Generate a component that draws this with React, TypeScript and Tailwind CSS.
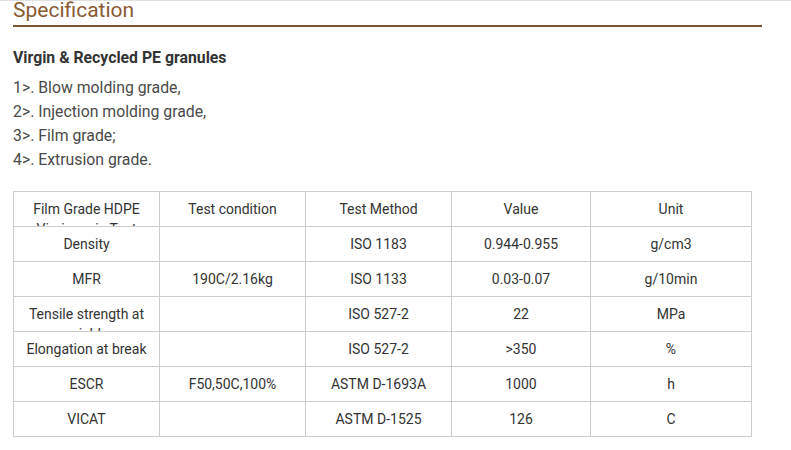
import React from "react";

const rows: string[][] = [
  ["Film Grade HDPE Virgin resin Test", "Test condition", "Test Method", "Value", "Unit"],
  ["Density", "", "ISO 1183", "0.944-0.955", "g/cm3"],
  ["MFR", "190C/2.16kg", "ISO 1133", "0.03-0.07", "g/10min"],
  ["Tensile strength at yield", "", "ISO 527-2", "22", "MPa"],
  ["Elongation at break", "", "ISO 527-2", ">350", "%"],
  ["ESCR", "F50,50C,100%", "ASTM D-1693A", "1000", "h"],
  ["VICAT", "", "ASTM D-1525", "126", "C"],
];

const widths = ["w-[146px]", "w-[146px]", "w-[146px]", "w-[139px]", "w-[161px]"];

export default function App() {
  return (
    <div className="w-[791px] h-[450px] bg-white overflow-hidden border-t border-[#e0e0e0]" style={{ fontFamily: "Roboto, 'Liberation Sans', sans-serif" }}>
      <div className="pl-[13px] w-[762px]">
        <div className="border-b-2 border-[#7b5331] h-[26px] flex items-end">
          <h2 className="text-[21px] leading-[26px] text-[#8a5a33] relative top-[-2px]">Specification</h2>
        </div>
        <div className="mt-[21px] text-[15.8px] font-bold text-[#333] leading-[20px]">Virgin &amp; Recycled PE granules</div>
        <div className="mt-[8px] text-[15.8px] text-[#4a4a4a] leading-[24px]">
          <div>1&gt;. Blow molding grade,</div>
          <div>2&gt;. Injection molding grade,</div>
          <div>3&gt;. Film grade;</div>
          <div>4&gt;. Extrusion grade.</div>
        </div>
        <table className="mt-[19px] border-collapse text-[14px] text-[#333]">
          <tbody>
            {rows.map((r, i) => (
              <tr key={i}>
                {r.map((c, j) => (
                  <td key={j} className={`${widths[j]} border border-[#cccccc] p-0 align-top`}>
                    <div className="h-[34px] overflow-hidden pt-[7px] leading-[20px] text-center px-[6px]">{c}</div>
                  </td>
                ))}
              </tr>
            ))}
          </tbody>
        </table>
      </div>
    </div>
  );
}
